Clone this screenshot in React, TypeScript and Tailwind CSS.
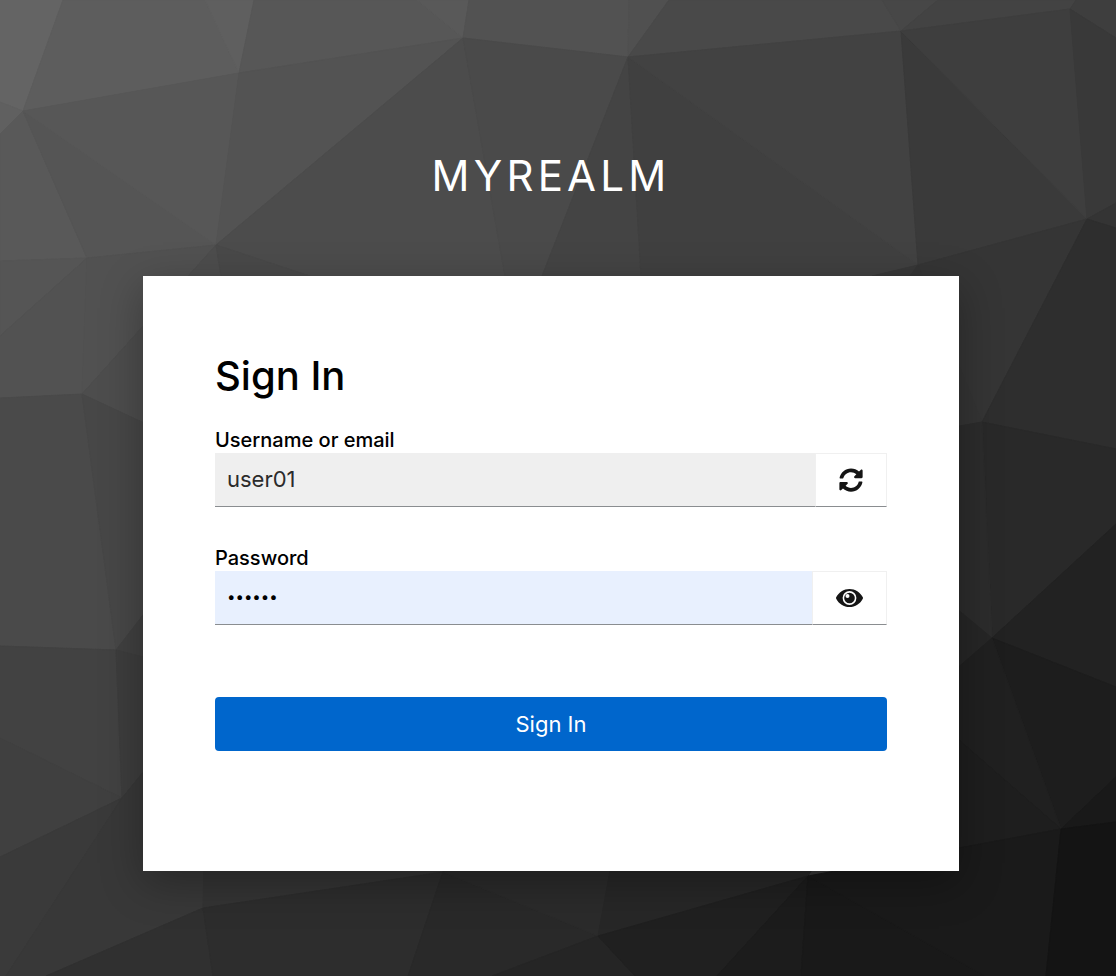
import { useState } from "react";
import { FaSyncAlt } from "react-icons/fa";

type Facet = { points: string; fill: string };

const facets: Facet[] = [
  // top row
  { points: "0,0 63,0 23,111 0,102", fill: "#646464" },
  { points: "0,102 23,111 0,134", fill: "#606060" },
  { points: "63,0 205,0 239,73 23,111", fill: "#5d5d5d" },
  { points: "205,0 254,0 239,73", fill: "#5f5f5f" },
  { points: "254,0 417,0 463,38 239,73", fill: "#575757" },
  { points: "417,0 469,0 463,38", fill: "#595959" },
  { points: "469,0 629,0 628,57 463,38", fill: "#525252" },
  { points: "629,0 669,0 628,57", fill: "#505050" },
  { points: "669,0 882,0 901,31 628,57", fill: "#494949" },
  { points: "882,0 938,0 901,31", fill: "#474747" },
  { points: "938,0 1076,0 1070,9 901,31", fill: "#434343" },
  { points: "1076,0 1116,0 1116,38 1070,9", fill: "#3e3e3e" },
  // upper band
  { points: "0,134 23,111 87,258 0,261", fill: "#595959" },
  { points: "23,111 216,245 87,258", fill: "#555555" },
  { points: "23,111 239,73 216,245", fill: "#575757" },
  { points: "239,73 463,38 216,245", fill: "#535353" },
  { points: "216,245 463,38 505,276 310,276", fill: "#4c4c4c" },
  { points: "463,38 628,57 542,276 505,276", fill: "#4a4a4a" },
  { points: "628,57 641,276 542,276", fill: "#444444" },
  { points: "628,57 918,265 872,276 641,276", fill: "#404040" },
  { points: "628,57 901,31 918,265", fill: "#424242" },
  { points: "901,31 1087,219 918,265", fill: "#3a3a3a" },
  { points: "901,31 1070,9 1087,219", fill: "#3e3e3e" },
  { points: "1070,9 1116,38 1116,203 1087,219", fill: "#393939" },
  { points: "1087,219 1116,203 1116,228", fill: "#343434" },
  // left side
  { points: "0,261 87,258 0,336", fill: "#555555" },
  { points: "0,336 87,258 82,394 0,398", fill: "#525252" },
  { points: "87,258 216,245 82,394", fill: "#515151" },
  { points: "82,394 216,245 221,276 221,459", fill: "#4d4d4d" },
  { points: "216,245 310,276 221,276", fill: "#494949" },
  { points: "0,398 82,394 116,650 0,646", fill: "#4a4a4a" },
  { points: "82,394 221,459 221,514 116,650", fill: "#474747" },
  { points: "116,650 221,514 221,677", fill: "#404040" },
  { points: "0,646 116,650 122,798 0,738", fill: "#424242" },
  { points: "0,738 122,798 0,857", fill: "#404040" },
  { points: "116,650 221,677 122,798", fill: "#3d3d3d" },
  { points: "0,857 122,798 6,976 0,976", fill: "#3a3a3a" },
  { points: "122,798 221,677 203,908 46,976 6,976", fill: "#383838" },
  // right side
  { points: "918,265 1087,219 982,422 890,276", fill: "#353535" },
  { points: "872,276 918,265 910,276", fill: "#383838" },
  { points: "910,276 918,265 982,422 880,440 880,276", fill: "#343434" },
  { points: "1087,219 1116,228 1116,449 982,422", fill: "#2e2e2e" },
  { points: "982,422 1116,449 1116,524 992,638", fill: "#292929" },
  { points: "880,440 982,422 992,638 880,545", fill: "#2c2c2c" },
  { points: "880,545 992,638 880,735", fill: "#262626" },
  { points: "992,638 1116,524 1116,687", fill: "#222222" },
  { points: "992,638 1116,687 1116,777 1061,829", fill: "#1d1d1d" },
  { points: "992,638 1061,829 880,671 880,735", fill: "#202020" },
  { points: "880,671 1061,829 880,863", fill: "#1e1e1e" },
  { points: "1061,829 1116,777 1116,822", fill: "#191919" },
  // bottom row
  { points: "203,908 204,865 443,865 443,872", fill: "#343434" },
  { points: "203,908 213,976 46,976", fill: "#303030" },
  { points: "203,908 443,872 408,976 213,976", fill: "#2d2d2d" },
  { points: "443,872 598,936 492,976 408,976", fill: "#292929" },
  { points: "443,872 443,865 611,865 598,936", fill: "#2b2b2b" },
  { points: "598,936 635,976 492,976", fill: "#252525" },
  { points: "598,936 611,865 815,865 808,876", fill: "#272727" },
  { points: "598,936 808,876 717,976 635,976", fill: "#202020" },
  { points: "808,876 801,976 717,976", fill: "#1c1c1c" },
  { points: "808,876 985,976 801,976", fill: "#191919" },
  { points: "808,876 1061,829 1046,976 985,976", fill: "#1a1a1a" },
  { points: "1061,829 1116,822 1116,976 1046,976", fill: "#141414" },
];

function Backdrop() {
  return (
    <svg
      aria-hidden="true"
      className="absolute inset-0 h-full w-full"
      viewBox="0 0 1116 976"
      preserveAspectRatio="xMidYMid slice"
    >
      <rect width="1116" height="976" fill="#383838" />
      {facets.map(({ points, fill }) => (
        <polygon key={points} points={points} fill={fill} stroke={fill} strokeWidth="1" strokeLinejoin="round" />
      ))}
    </svg>
  );
}

function EyeIcon() {
  return (
    <svg aria-hidden="true" className="h-[18px] w-[27px]" viewBox="0 0 27 18" fill="currentColor">
      <path d="M26.8 8.3C24.3 3.3 19.2 0 13.5 0S2.7 3.3.2 8.3a1.5 1.5 0 0 0 0 1.4C2.7 14.7 7.8 18 13.5 18s10.8-3.3 13.3-8.3a1.5 1.5 0 0 0 0-1.4Z" />
      <circle cx="13.5" cy="9" r="6.9" fill="#ffffff" />
      <circle cx="13.5" cy="9" r="5.3" />
      <circle cx="11.5" cy="6.9" r="2" fill="#ffffff" />
    </svg>
  );
}

export default function App() {
  const [username, setUsername] = useState("user01");
  const [password, setPassword] = useState("secret");
  const [visible, setVisible] = useState(false);

  return (
    <div className="relative min-h-screen overflow-hidden bg-[#383838] font-['Inter',sans-serif] text-black">
      <Backdrop />
      <div className="relative flex min-h-screen flex-col pr-[157px] pl-[143px]">
        <header className="pt-[116px] pb-[40px] text-center text-[42px] leading-[120px] font-normal tracking-widest text-white uppercase">
          myrealm
        </header>
        <main className="bg-white px-[72px] pt-[72px] pb-[120px] shadow-[0_12px_40px_rgba(3,3,3,0.3)]">
          <h1 className="text-[40px] leading-[56px] font-medium">Sign In</h1>
          <form className="pt-[20px]" onSubmit={(e) => e.preventDefault()}>
            <label htmlFor="username" className="block h-[29px] text-[20px] leading-[32px] font-medium">
              Username or email
            </label>
            <div className="flex h-[54px]">
              <input
                id="username"
                type="text"
                value={username}
                onChange={(e) => setUsername(e.target.value)}
                className="min-w-0 flex-1 border-b border-[#8a8d90] bg-[#efefef] px-[12px] text-[22px] text-[#2b2b2b] outline-none"
              />
              <button
                type="button"
                aria-label="Restart login"
                className="flex w-[72px] items-center justify-center border border-[#f0f0f0] border-b-[#8a8d90] text-[24px] text-[#151515]"
                onClick={() => setUsername("")}
              >
                <FaSyncAlt />
              </button>
            </div>
            <label htmlFor="password" className="mt-[35px] block h-[29px] text-[20px] leading-[32px] font-medium">
              Password
            </label>
            <div className="flex h-[54px]">
              <input
                id="password"
                type={visible ? "text" : "password"}
                value={password}
                onChange={(e) => setPassword(e.target.value)}
                className="min-w-0 flex-1 border-b border-[#8a8d90] bg-[#e8f0fe] px-[12px] text-[15px] text-black outline-none"
              />
              <button
                type="button"
                aria-label="Show password"
                className="flex w-[75px] items-center justify-center border border-[#f0f0f0] border-b-[#8a8d90] text-[#151515]"
                onClick={() => setVisible(!visible)}
              >
                <EyeIcon />
              </button>
            </div>
            <button
              type="submit"
              className="mt-[72px] block h-[54px] w-full rounded-[4px] bg-[#0066cc] text-[22px] text-white"
            >
              Sign In
            </button>
          </form>
        </main>
      </div>
    </div>
  );
}
